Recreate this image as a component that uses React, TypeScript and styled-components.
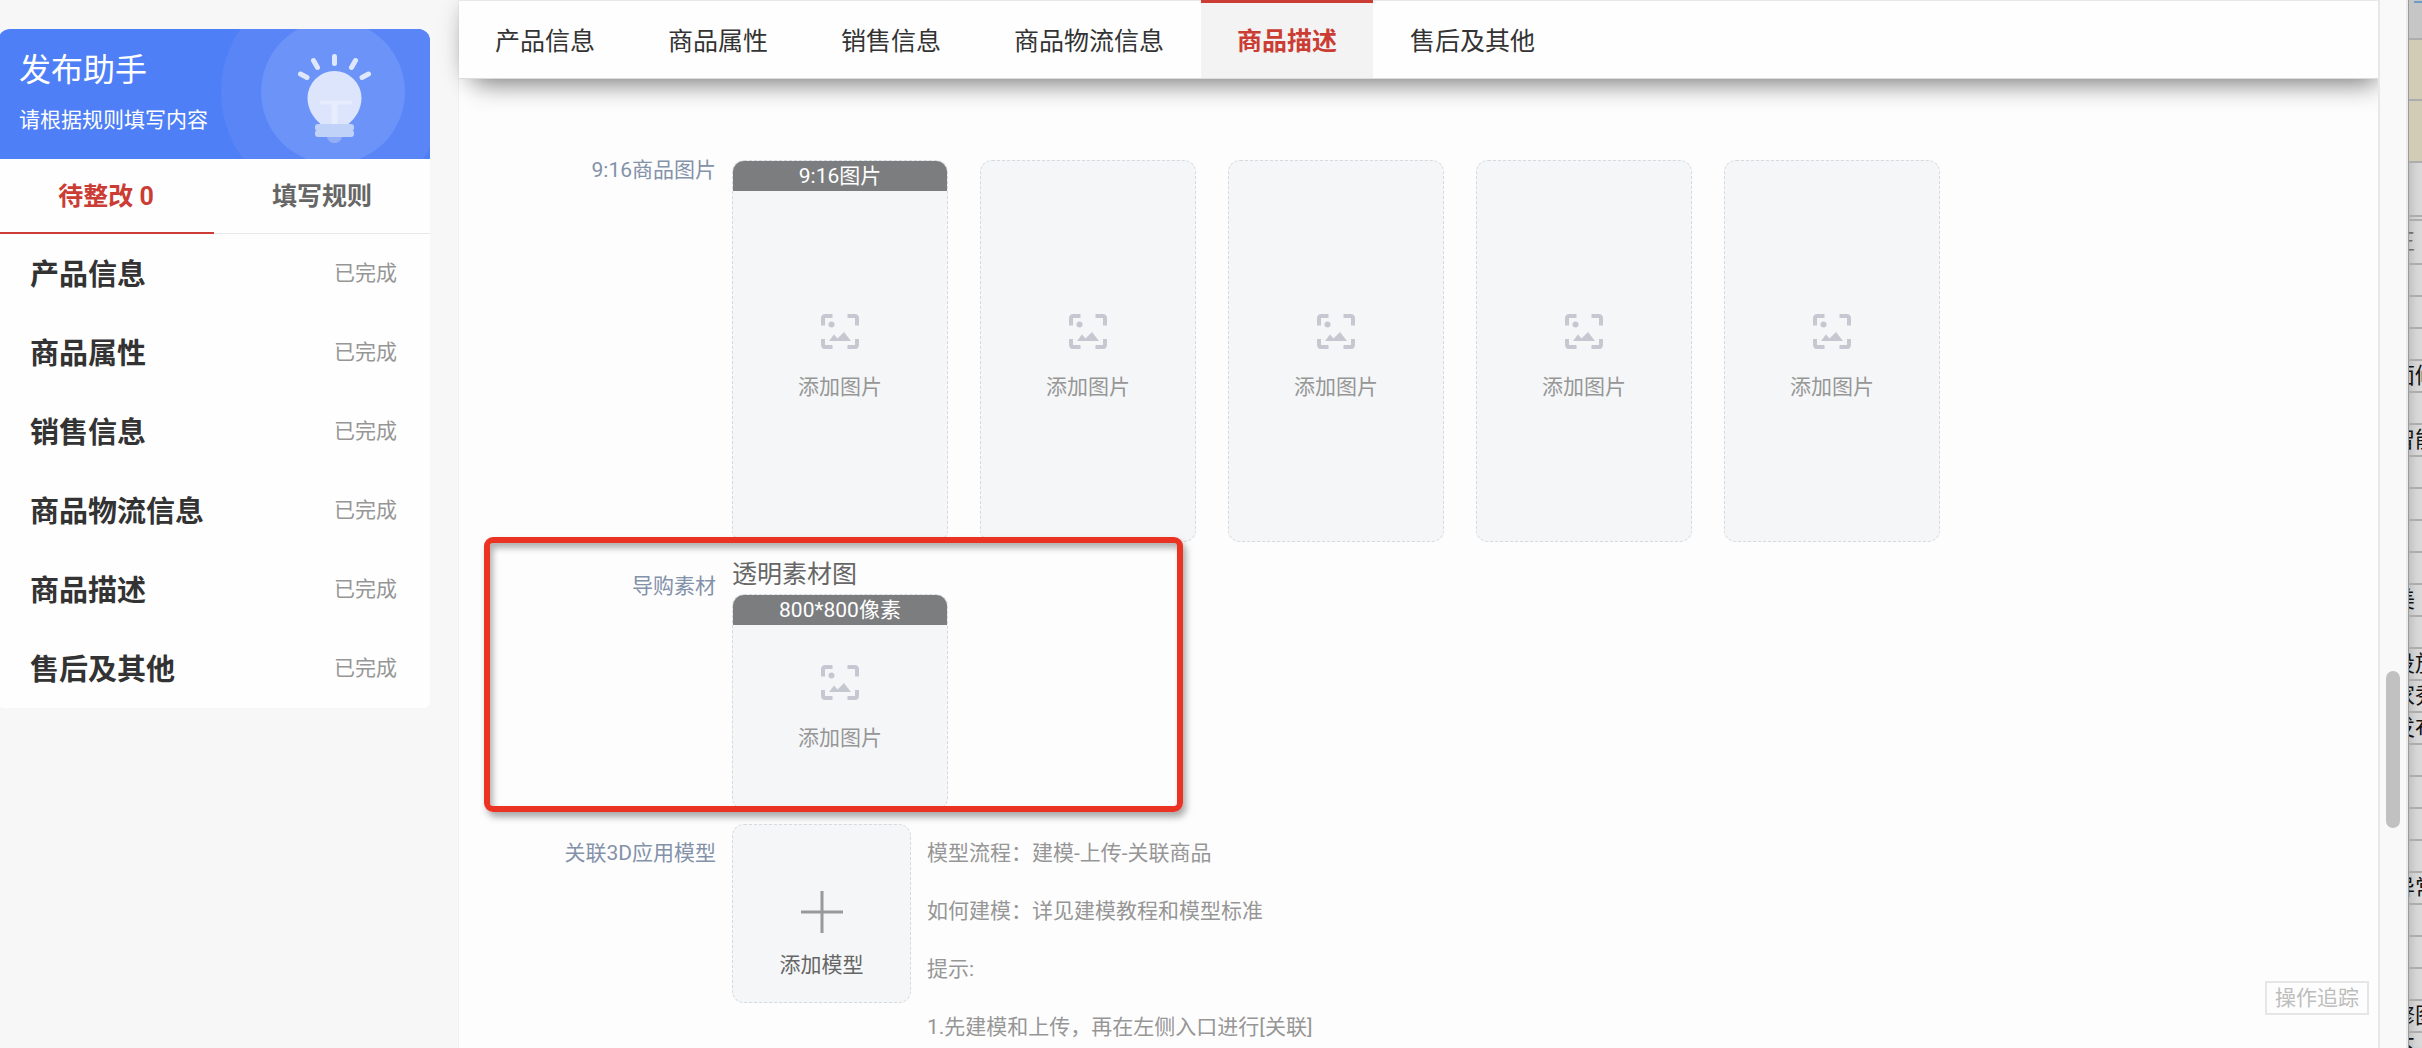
import React, { useState } from "react";
import styled, { createGlobalStyle } from "styled-components";

const color = {
  red: "#cb3d34",
  blue: "#4f7ff7",
  ink: "#333",
  sub: "#666",
  muted: "#969696",
  label: "#8391a9",
  card: "#f5f6f8",
};

const GlobalStyle = createGlobalStyle`
  *, *::before, *::after { box-sizing: border-box; }
  html, body { margin: 0; height: 100%; }
  #root { height: 100%; }
  body, button {
    font-family: Roboto, "Noto Sans CJK SC", sans-serif;
    font-size: 21px;
    line-height: 30px;
    color: ${color.ink};
  }
  button { margin: 0; padding: 0; border: 0; background: none; cursor: pointer; }
  ul, p, h1, h2 { margin: 0; padding: 0; list-style: none; font-weight: 400; }
`;

const Page = styled.div`
  display: flex;
  height: 100vh;
  overflow: hidden;
  background: #f7f7f7;
`;

/* ---------- left helper ---------- */

const Sidebar = styled.aside`
  flex: none;
  width: 432px;
  margin: 29px 28px 0 -2px;
`;

const Banner = styled.header`
  position: relative;
  display: flex;
  flex-direction: column;
  gap: 15px;
  height: 130px;
  padding: 21px 21px 0;
  overflow: hidden;
  border-radius: 12px 12px 0 0;
  background: ${color.blue};
  color: #fff;
`;

const BannerTitle = styled.h1`
  font-size: 32px;
  line-height: 40px;
`;

const BulbArt = styled.svg`
  position: absolute;
  top: 0;
  right: 0;
  width: 210px;
  height: 130px;
`;

const HelperTabs = styled.div`
  display: flex;
  height: 75px;
  background: #fefefe;
`;

const HelperTab = styled.button<{ $active: boolean }>`
  flex: 1;
  font-size: 25px;
  font-weight: 700;
  color: ${(p) => (p.$active ? color.red : color.sub)};
  box-shadow: ${(p) => (p.$active ? `inset 0 -2px ${color.red}` : "inset 0 -1px #e8e8e8")};
`;

const SectionList = styled.ul`
  background: #fefefe;
  border-radius: 0 0 6px 6px;
`;

const SectionItem = styled.li`
  display: flex;
  align-items: center;
  justify-content: space-between;
  height: 79px;
  padding: 0 33px 0 32px;
`;

const SectionName = styled.span`
  padding-top: 2px;
  font-size: 29px;
  line-height: 40px;
  font-weight: 700;
`;

const SectionState = styled.span`
  padding-bottom: 2px;
  color: ${color.muted};
`;

/* ---------- form panel ---------- */

const Main = styled.main`
  position: relative;
  flex: 1;
  min-width: 0;
  background: #fdfdfd;
  border-left: 1px solid #f0f0f0;
`;

const NavClip = styled.div`
  padding: 0 0 50px 40px;
  margin: 0 0 -50px -40px;
  overflow: hidden;
`;

const Nav = styled.nav`
  display: flex;
  gap: 1px;
  height: 79px;
  border-top: 1px solid #e8e8e8;
  border-bottom: 1px solid #dcdcdc;
  background: #fefefe;
  box-shadow: 8px 14px 26px -8px rgba(0, 0, 0, 0.42), -2px 0 24px -6px rgba(0, 0, 0, 0.26);
`;

const NavTab = styled.button<{ $active: boolean }>`
  margin-top: -1px;
  padding: 3px 36px 0;
  border-top: 3px solid ${(p) => (p.$active ? color.red : "transparent")};
  background: ${(p) => (p.$active ? "#f3f3f3" : "transparent")};
  color: ${(p) => (p.$active ? color.red : color.ink)};
  font-size: 25px;
  font-weight: ${(p) => (p.$active ? 700 : 400)};
`;

const Form = styled.div`
  padding-top: 81px;
`;

const Field = styled.section<{ $space: number }>`
  position: relative;
  display: grid;
  grid-template-columns: 257px 1fr;
  column-gap: 16px;
  margin-bottom: ${(p) => p.$space}px;
`;

const FieldLabel = styled.h2<{ $line: number }>`
  font-size: 21px;
  line-height: ${(p) => p.$line}px;
  text-align: right;
  color: ${color.label};
`;

const Slots = styled.div`
  display: flex;
  gap: 32px;
`;

const Caption = styled.p`
  font-size: 25px;
  line-height: 30px;
  margin-bottom: 4px;
  color: ${color.sub};
`;

const Card = styled.button<{ $width: number; $height: number; $top: number; $gap: number }>`
  position: relative;
  flex: none;
  display: flex;
  flex-direction: column;
  align-items: center;
  justify-content: center;
  gap: ${(p) => p.$gap}px;
  width: ${(p) => p.$width}px;
  height: ${(p) => p.$height}px;
  padding-top: ${(p) => p.$top}px;
  overflow: hidden;
  border: 1px dashed #d6d9de;
  border-radius: 12px;
  background: ${color.card};
  color: ${color.muted};
`;

const CardBadge = styled.span`
  position: absolute;
  inset: 0 0 auto;
  background: #7c7d7f;
  color: #fff;
`;

const CardText = styled.span<{ $dark?: boolean }>`
  color: ${(p) => (p.$dark ? color.sub : color.muted)};
`;

const ModelRow = styled.div`
  display: flex;
  gap: 16px;
`;

const Notes = styled.div`
  line-height: 58px;
  color: ${color.muted};
`;

const Highlight = styled.div`
  position: absolute;
  top: -23px;
  left: 25px;
  width: 699px;
  height: 275px;
  border: 6px solid #eb3323;
  border-radius: 9px;
  box-shadow: 3px 5px 7px rgba(0, 0, 0, 0.34), inset 3px 5px 6px rgba(0, 0, 0, 0.3);
  pointer-events: none;
`;

const TraceButton = styled.button`
  position: absolute;
  right: 9px;
  bottom: 33px;
  padding: 0 8px;
  border: 2px solid #e6e6e6;
  color: #bdbdbd;
`;

/* ---------- window edge ---------- */

const ScrollTrack = styled.div`
  flex: none;
  width: 30px;
  padding: 64vh 6px 0;
  border-left: 2px solid #e8e8e8;
  border-right: 2px solid #ececec;
  background: #f9f9f9;
`;

const ScrollThumb = styled.div`
  height: 15vh;
  border-radius: 8px;
  background: #c1c1c1;
`;

const Sheet = styled.ul`
  flex: none;
  width: 14px;
  overflow: hidden;
  border-left: 1px solid #9b9b9b;
  box-shadow: inset 8px 0 10px -6px rgba(0, 0, 0, 0.16);
  background: #d9d9d9;
`;

const SheetCell = styled.li<{ $height: number; $tone?: string; $dim?: boolean }>`
  display: flex;
  align-items: center;
  height: ${(p) => p.$height}px;
  border-bottom: 2px solid #adadad;
  background: ${(p) => p.$tone || "transparent"};
  color: ${(p) => (p.$dim ? "#6f6f6f" : "#111")};
  font-size: 22px;
  white-space: nowrap;
  text-indent: -16px;
`;

const SheetMark = styled.span`
  align-self: flex-start;
  width: 8px;
  height: 2px;
  margin: 1px 0 0 5px;
  background: #6f9bc8;
`;

function Bulb() {
  return (
    <BulbArt viewBox="220 29 210 130" aria-hidden="true">
      <circle cx="333" cy="92" r="112" fill="#5985f7" />
      <circle cx="333" cy="92" r="72" fill="#6c93f8" />
      <g stroke="#dfe7fd" strokeWidth="5" strokeLinecap="round">
        <path d="M334.5 56.500V63.500M313.500 60.500L317.500 67.500M355.500 60.500L351.500 67.500M300.500 74L307 77.500M368.500 74L362 77.500" />
      </g>
      <path d="M327 137h15c-1 4-4 6-7.500 6s-6.500-2-7.500-6z" fill="#94aef6" />
      <path d="M334.500 71a27 27 0 0 1 27 27c0 11-6 20-13 26h-28c-7-6-13-15-13-26a27 27 0 0 1 27-27z" fill="#dce5fc" />
      <path d="M322 100.500h28a2 2 0 0 1 0 4h-12.500v19.500h-6v-19.500h-9.500a2 2 0 0 1 0-4z" fill="#e7edfd" />
      <rect x="315" y="124" width="39" height="7" rx="3" fill="#c0d2f8" />
      <rect x="315" y="130" width="39" height="7" rx="3" fill="#c0d2f8" />
    </BulbArt>
  );
}

function PictureIcon() {
  return (
    <svg width="38" height="35" viewBox="0 0 38 35" aria-hidden="true">
      <path
        d="M2 11.500V4.500Q2 2 4.500 2H11.500M26.500 2H33.500Q36 2 36 4.500V11.500M36 25V30.500Q36 33 33.500 33H26.500M11.500 33H4.500Q2 33 2 30.500V25"
        fill="none"
        stroke="#c6c8d1"
        strokeWidth="4"
      />
      <circle cx="10.500" cy="10.500" r="3" fill="#c6c8d1" />
      <path d="M8 27L13 20.500L16.500 24.500L23 18L30 27Z" fill="#c6c8d1" />
    </svg>
  );
}

function PictureCard({ height, badge }: { height: number; badge?: string }) {
  return (
    <Card type="button" $width={216} $height={height} $top={14} $gap={23}>
      {badge && <CardBadge>{badge}</CardBadge>}
      <PictureIcon />
      <CardText>添加图片</CardText>
    </Card>
  );
}

const sections = ["产品信息", "商品属性", "销售信息", "商品物流信息", "商品描述", "售后及其他"];

const notes = [
  "模型流程：建模-上传-关联商品",
  "如何建模：详见建模教程和模型标准",
  "提示:",
  "1.先建模和上传，再在左侧入口进行[关联]",
];

const sheetRows = [
  "", "", "", "面修", "", "智能", "", "", "", "", "美", "", "投放", "家秀", "发布",
  "", "", "", "", "异常", "", "", "", "修图", "不",
];

export default function App() {
  const [active, setActive] = useState("商品描述");
  const [helper, setHelper] = useState(0);

  return (
    <Page>
      <GlobalStyle />
      <Sidebar>
        <Banner>
          <Bulb />
          <BannerTitle>发布助手</BannerTitle>
          <p>请根据规则填写内容</p>
        </Banner>
        <HelperTabs>
          {["待整改 0", "填写规则"].map((name, i) => (
            <HelperTab key={name} type="button" $active={helper === i} onClick={() => setHelper(i)}>
              {name}
            </HelperTab>
          ))}
        </HelperTabs>
        <SectionList>
          {sections.map((name) => (
            <SectionItem key={name}>
              <SectionName>{name}</SectionName>
              <SectionState>已完成</SectionState>
            </SectionItem>
          ))}
        </SectionList>
      </Sidebar>

      <Main>
        <NavClip>
          <Nav>
            {sections.map((name) => (
              <NavTab key={name} type="button" $active={name === active} onClick={() => setActive(name)}>
                {name}
              </NavTab>
            ))}
          </Nav>
        </NavClip>

        <Form>
          <Field $space={18}>
            <FieldLabel $line={20}>9:16商品图片</FieldLabel>
            <Slots>
              <PictureCard height={382} badge="9:16图片" />
              <PictureCard height={382} />
              <PictureCard height={382} />
              <PictureCard height={382} />
              <PictureCard height={382} />
            </Slots>
          </Field>

          <Field $space={14}>
            <FieldLabel $line={52}>导购素材</FieldLabel>
            <div>
              <Caption>透明素材图</Caption>
              <PictureCard height={216} badge="800*800像素" />
            </div>
            <Highlight />
          </Field>

          <Field $space={0}>
            <FieldLabel $line={58}>关联3D应用模型</FieldLabel>
            <ModelRow>
              <Card type="button" $width={179} $height={179} $top={44} $gap={17}>
                <svg width="42" height="42" viewBox="0 0 42 42" aria-hidden="true">
                  <path d="M21 0V42M0 21H42" stroke="#999" strokeWidth="3" />
                </svg>
                <CardText $dark>添加模型</CardText>
              </Card>
              <Notes>
                {notes.map((text) => (
                  <p key={text}>{text}</p>
                ))}
              </Notes>
            </ModelRow>
          </Field>
        </Form>

        <TraceButton type="button">操作追踪</TraceButton>
      </Main>

      <ScrollTrack>
        <ScrollThumb />
      </ScrollTrack>

      <Sheet>
        <SheetCell $height={40} $tone="#c6c6c6">
          <SheetMark />
        </SheetCell>
        <SheetCell $height={61} $tone="#d2ccb7" />
        <SheetCell $height={62} $tone="#d2ccb7" />
        <SheetCell $height={54} />
        <SheetCell $height={4} />
        <SheetCell $height={44} $dim>
          正
        </SheetCell>
        {sheetRows.map((text, i) => (
          <SheetCell key={i} $height={32}>
            {text}
          </SheetCell>
        ))}
      </Sheet>
    </Page>
  );
}
